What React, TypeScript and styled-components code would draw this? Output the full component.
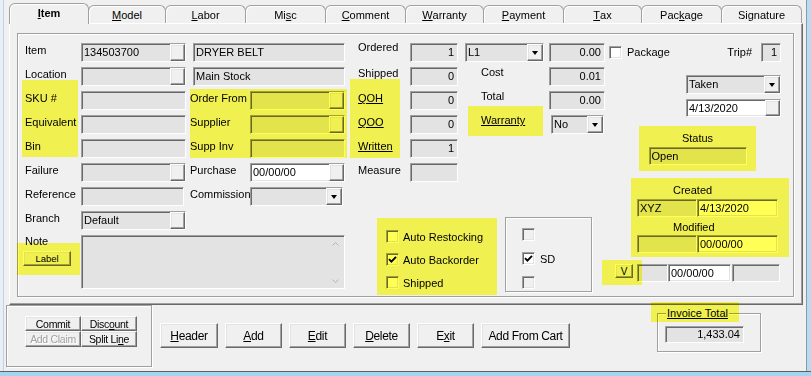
import type { ReactNode } from "react";
import styled, { createGlobalStyle, css } from "styled-components";

const SANS = `"Liberation Sans", Arial, sans-serif`;
const MARK = "#ffff55";

const GlobalStyle = createGlobalStyle`
  * { box-sizing: border-box; }
  html, body { margin: 0; padding: 0; background: #f0f0f0; }
  body { font-family: ${SANS}; font-size: 11px; color: #000; }
`;

const sunken = css`
  border: 1px solid;
  border-color: #a0a0a0 #ffffff #ffffff #a0a0a0;
  box-shadow: inset 1px 1px 0 #696969, inset -1px -1px 0 #e3e3e3;
`;

const raised = css`
  border: 1px solid;
  border-color: #ffffff #696969 #696969 #ffffff;
  box-shadow: inset -1px -1px 0 #a0a0a0, inset 1px 1px 0 #e3e3e3;
  background: #f0f0f0;
`;

const etched = css`
  border: 1px solid #a0a0a0;
  box-shadow: inset 1px 1px 0 #ffffff, 1px 1px 0 #ffffff;
`;

// yellow highlighter laid over a part of the form
const markOverlay = (ext: number[] = [0, 0, 0, 0]) => css`
  position: relative;
  &::after {
    content: "";
    position: absolute;
    top: ${-ext[0]}px;
    right: ${-ext[1]}px;
    bottom: ${-ext[2]}px;
    left: ${-ext[3]}px;
    background: ${MARK};
    mix-blend-mode: multiply;
    pointer-events: none;
  }
`;

const Mark = styled.div<{ $ext?: number[] }>`
  ${(p) => markOverlay(p.$ext)};
`;

const Window = styled.div`
  width: 811px;
  height: 376px;
  padding-left: 6px;
  background: #f0f0f0;
  overflow: hidden;
  box-shadow: inset 0 -4px 0 #a3d4f2, inset 0 -5px 0 #606060, inset -4px 0 0 #b8dbf2,
    inset -5px 0 0 #8c9aa8, inset 3px 0 0 #e6eef6, inset 4px 0 0 #c6d3df;
`;

const TabStrip = styled.div`
  display: flex;
  align-items: flex-end;
  height: 23px;
  margin-left: 3px;
`;

const Tab = styled.div<{ $w: number; $active?: boolean }>`
  position: relative;
  z-index: ${(p) => (p.$active ? 2 : 1)};
  width: ${(p) => p.$w}px;
  height: ${(p) => (p.$active ? 21 : 18)}px;
  margin-bottom: ${(p) => (p.$active ? -1 : 0)}px;
  margin-left: -1px;
  border: 1px solid #a0a0a0;
  border-bottom: none;
  border-radius: 6px 6px 0 0;
  box-shadow: inset 1px 1px 0 #ffffff;
  background: #f0f0f0;
  display: flex;
  align-items: center;
  justify-content: center;
  padding-bottom: ${(p) => (p.$active ? 2 : 0)}px;
  font-weight: ${(p) => (p.$active ? 700 : 400)};
  &:first-child {
    margin-left: 0;
  }
`;

const TabPanel = styled.div`
  margin-left: 3px;
  width: 794px;
  height: 282px;
  border: 1px solid;
  border-color: #ffffff #696969 #696969 #ffffff;
  box-shadow: inset -1px -1px 0 #a0a0a0;
  padding: 9px 8px 7px 7px;
`;

const MainFrame = styled.div`
  ${etched};
  width: 777px;
  height: 264px;
  display: flex;
  padding: 7px 0 0 4px;
`;

const LeftArea = styled.div`
  width: 583px;
  display: flex;
  flex-direction: column;
`;

const COLS = "59px 105px 64px 95px 65px 48px 86px 61px";

const GridStack = styled.div`
  display: grid;
  & > * {
    grid-area: 1 / 1;
  }
`;

const FieldGrid = styled.div`
  display: grid;
  grid-template-columns: ${COLS};
  grid-template-rows: repeat(7, 24px);
  align-items: start;
`;

const MarkGrid = styled.div`
  display: grid;
  grid-template-columns: ${COLS};
  grid-template-rows: repeat(7, 24px);
  pointer-events: none;
`;

const GridMark = styled.div<{ $area: string; $m: string }>`
  grid-area: ${(p) => p.$area};
  margin: ${(p) => p.$m};
  background: ${MARK};
  mix-blend-mode: multiply;
`;

const Label = styled.span<{ $pl?: number; $pt?: number }>`
  padding-left: ${(p) => p.$pl ?? 3}px;
  padding-top: ${(p) => p.$pt ?? 3}px;
  line-height: 13px;
  white-space: nowrap;
`;

const RowLabel = styled(Label)`
  grid-column: 1;
`;

const LinkLabel = styled(Label)`
  text-decoration: underline;
`;

type FieldProps = {
  $w?: number;
  $h?: number;
  $ml?: number;
  $mr?: number;
  $mt?: number;
  $span?: number;
  $white?: boolean;
};

const Field = styled.div<FieldProps>`
  ${sunken};
  display: flex;
  flex: none;
  height: ${(p) => p.$h ?? 19}px;
  ${(p) => (p.$w ? `width: ${p.$w}px;` : "")}
  margin: ${(p) => p.$mt ?? 0}px ${(p) => p.$mr ?? 0}px 0 ${(p) => p.$ml ?? 0}px;
  ${(p) => (p.$span ? `grid-column: span ${p.$span};` : "")}
  background: ${(p) => (p.$white ? "#ffffff" : "#e3e3e3")};
  overflow: hidden;
`;

const FieldText = styled.span<{ $right?: boolean }>`
  flex: 1;
  min-width: 0;
  padding: 0 3px 0 2px;
  align-self: center;
  line-height: 15px;
  white-space: nowrap;
  text-align: ${(p) => (p.$right ? "right" : "left")};
`;

const FieldButton = styled.span`
  ${raised};
  width: 15px;
  flex: none;
`;

const ComboArrow = styled.span`
  ${raised};
  width: 16px;
  flex: none;
  display: flex;
  align-items: center;
  justify-content: center;
  &::before {
    content: "";
    border-left: 3.5px solid transparent;
    border-right: 3.5px solid transparent;
    border-top: 4px solid #000;
  }
`;

const GridField = styled(Field)`
  margin-top: 2px;
`;

const RightArea = styled.div`
  width: 188px;
  display: flex;
  flex-direction: column;
`;

const TopLine = styled.div`
  display: flex;
  align-items: center;
  height: 19px;
  margin: 2px 12px 0 4px;
`;

const PackageLabel = styled(Label)`
  margin-right: auto;
`;

const TripLabel = styled(Label)`
  margin-right: 9px;
`;

const StatusMark = styled(Mark)`
  margin: 9px 0 0 34px;
  width: 117px;
  height: 45px;
  display: flex;
  flex-direction: column;
  align-items: center;
`;

const CreatedMark = styled(Mark)`
  margin: 7px 0 0 26px;
  width: 158px;
  height: 79px;
  padding: 6px 0 0 6px;
  display: flex;
  flex-direction: column;
`;

const PairRow = styled.div<{ $mt: number }>`
  display: flex;
  margin-top: ${(p) => p.$mt}px;
`;

const VRow = styled.div`
  display: flex;
  align-items: flex-start;
  margin: 7px 0 0 10px;
`;

const VButton = styled.div`
  ${raised};
  width: 18px;
  height: 14px;
  font-size: 10px;
  display: flex;
  align-items: center;
  justify-content: center;
`;

const BottomRow = styled.div`
  display: flex;
  align-items: flex-start;
`;

const NoteColumn = styled.div`
  width: 323px;
  display: flex;
  flex-direction: column;
`;

const BranchRow = styled.div`
  display: grid;
  grid-template-columns: 59px 105px;
  height: 24px;
  align-items: start;
`;

const NoteRow = styled.div`
  display: flex;
  margin-top: 2px;
`;

const NoteSide = styled.div`
  width: 59px;
  display: flex;
  flex-direction: column;
  align-items: flex-start;
`;

const LabelMark = styled(Mark)`
  margin: 3px 0 0 1px;
`;

const SmallButton = styled.div`
  ${raised};
  width: 48px;
  height: 15px;
  font-size: 9.5px;
  display: flex;
  align-items: center;
  justify-content: center;
`;

const NoteBox = styled.div`
  ${sunken};
  width: 264px;
  height: 54px;
  background: #e3e3e3;
  display: flex;
  justify-content: flex-end;
`;

const ScrollBar = styled.div`
  width: 17px;
  display: flex;
  flex-direction: column;
  justify-content: space-between;
  align-items: center;
  padding: 6px 0 5px;
`;

const AutoMark = styled(Mark)`
  margin: 9px 0 0 32px;
  width: 120px;
  height: 77px;
  padding: 12px 0 0 9px;
  display: flex;
  flex-direction: column;
  gap: 10px;
`;

const SDFrame = styled.div`
  ${etched};
  margin: 8px 0 0 8px;
  width: 87px;
  height: 75px;
  padding: 10px 0 0 16px;
  display: flex;
  flex-direction: column;
  gap: 11px;
`;

const CheckRow = styled.div<{ $gap?: number }>`
  display: flex;
  align-items: center;
  height: 13px;
  gap: ${(p) => p.$gap ?? 4}px;
  white-space: nowrap;
`;

const CheckBox = styled.span<{ $disabled?: boolean }>`
  ${sunken};
  width: 13px;
  height: 13px;
  flex: none;
  background: ${(p) => (p.$disabled ? "#f0f0f0" : "#ffffff")};
  display: inline-flex;
  align-items: center;
  justify-content: center;
`;

const BottomBar = styled.div`
  display: flex;
  align-items: flex-start;
  height: 66px;
`;

const ActionFrame = styled.div`
  ${etched};
  width: 146px;
  height: 62px;
  padding: 10px 0 0 18px;
`;

const MiniGrid = styled.div`
  display: grid;
  grid-template-columns: 56px 56px;
  grid-template-rows: 15px 16px;
`;

const MiniButton = styled.div<{ $disabled?: boolean }>`
  ${raised};
  font-size: 10.5px;
  letter-spacing: -0.3px;
  display: flex;
  align-items: center;
  justify-content: center;
  color: ${(p) => (p.$disabled ? "#a0a0a0" : "#000")};
  text-shadow: ${(p) => (p.$disabled ? "1px 1px 0 #fff" : "none")};
`;

const ButtonRow = styled.div`
  display: flex;
  gap: 7px;
  margin: 18px 0 0 8px;
`;

const ActionButton = styled.button<{ $w: number }>`
  ${raised};
  width: ${(p) => p.$w}px;
  height: 25px;
  padding: 0;
  font-family: ${SANS};
  font-size: 12px;
  letter-spacing: -0.35px;
  color: #000;
`;

const InvoiceSet = styled.fieldset`
  margin: 2px 0 0 87px;
  padding: 0 7px;
  width: 104px;
  height: 45px;
  min-width: 0;
  border: 1px solid #a0a0a0;
  box-shadow: inset 1px 1px 0 #ffffff, 1px 1px 0 #ffffff;
`;

const InvoiceLegend = styled.legend`
  ${markOverlay([5, 10, 2, 15])};
  margin-left: 1px;
  padding: 0 1px;
  line-height: 13px;
  background: #f0f0f0;
  text-decoration: underline;
`;

const Tick = () => (
  <svg width="9" height="9" viewBox="0 0 9 9">
    <path d="M1 4.2 L3.4 6.6 L8 1.8" fill="none" stroke="#000" strokeWidth="1.9" />
  </svg>
);

const Chevron = ({ up }: { up?: boolean }) => (
  <svg width="7" height="4" viewBox="0 0 7 4">
    <path d={up ? "M0.5 3.5 L3.5 0.5 L6.5 3.5" : "M0.5 0.5 L3.5 3.5 L6.5 0.5"} fill="none" stroke="#b4b4b4" />
  </svg>
);

const TABS: { label: ReactNode; w: number; active?: boolean }[] = [
  { label: <><u>I</u>tem</>, w: 80, active: true },
  { label: <><u>M</u>odel</>, w: 78 },
  { label: <><u>L</u>abor</>, w: 81 },
  { label: <>Mi<u>s</u>c</>, w: 81 },
  { label: <><u>C</u>omment</>, w: 81 },
  { label: <><u>W</u>arranty</>, w: 79 },
  { label: <><u>P</u>ayment</>, w: 81 },
  { label: <><u>T</u>ax</>, w: 79 },
  { label: <>Pac<u>k</u>age</>, w: 81 },
  { label: <>Signature</>, w: 81 },
];

export default function App() {
  return (
    <>
      <GlobalStyle />
      <Window>
        <TabStrip>
          {TABS.map((t, i) => (
            <Tab key={i} $w={t.w} $active={t.active}>
              {t.label}
            </Tab>
          ))}
        </TabStrip>

        <TabPanel>
          <MainFrame>
            <LeftArea>
              <GridStack>
                <FieldGrid>
                  <RowLabel>Item</RowLabel>
                  <GridField><FieldText>134503700</FieldText><FieldButton /></GridField>
                  <GridField $span={2} $ml={7}><FieldText>DRYER BELT</FieldText></GridField>
                  <Label $pl={13} $pt={0}>Ordered</Label>
                  <GridField><FieldText $right>1</FieldText></GridField>
                  <GridField $ml={7}><FieldText>L1</FieldText><ComboArrow /></GridField>
                  <GridField $ml={5}><FieldText $right>0.00</FieldText></GridField>

                  <RowLabel>Location</RowLabel>
                  <GridField><FieldText /><FieldButton /></GridField>
                  <GridField $span={2} $ml={7}><FieldText>Main Stock</FieldText></GridField>
                  <Label $pl={13} $pt={2}>Shipped</Label>
                  <GridField><FieldText $right>0</FieldText></GridField>
                  <Label $pl={23} $pt={1}>Cost</Label>
                  <GridField $ml={5}><FieldText $right>0.01</FieldText></GridField>

                  <RowLabel>SKU #</RowLabel>
                  <GridField />
                  <Label $pl={4}>Order From</Label>
                  <GridField><FieldText /><FieldButton /></GridField>
                  <LinkLabel $pl={13}>QOH</LinkLabel>
                  <GridField><FieldText $right>0</FieldText></GridField>
                  <Label $pl={23} $pt={1}>Total</Label>
                  <GridField $ml={5}><FieldText $right>0.00</FieldText></GridField>

                  <RowLabel>Equivalent</RowLabel>
                  <GridField />
                  <Label $pl={4}>Supplier</Label>
                  <GridField><FieldText /><FieldButton /></GridField>
                  <LinkLabel $pl={13}>QOO</LinkLabel>
                  <GridField><FieldText $right>0</FieldText></GridField>
                  <LinkLabel $pl={23} $pt={1}>Warranty</LinkLabel>
                  <GridField $ml={7} $mr={1}><FieldText>No</FieldText><ComboArrow /></GridField>

                  <RowLabel>Bin</RowLabel>
                  <GridField />
                  <Label $pl={4}>Supp Inv</Label>
                  <GridField />
                  <LinkLabel $pl={13}>Written</LinkLabel>
                  <GridField><FieldText $right>1</FieldText></GridField>

                  <RowLabel>Failure</RowLabel>
                  <GridField><FieldText /><FieldButton /></GridField>
                  <Label $pl={4}>Purchase</Label>
                  <GridField $white><FieldText>00/00/00</FieldText><FieldButton /></GridField>
                  <Label $pl={13}>Measure</Label>
                  <GridField />

                  <RowLabel>Reference</RowLabel>
                  <GridField $mr={2} />
                  <Label $pl={4}>Commission</Label>
                  <GridField $mr={2}><FieldText /><ComboArrow /></GridField>
                </FieldGrid>

                <MarkGrid>
                  <GridMark $area="3 / 1 / 6 / 2" $m="-9px 3px 4px 0" />
                  <GridMark $area="3 / 3 / 6 / 5" $m="0 -2px 3px 4px" />
                  <GridMark $area="3 / 5 / 6 / 6" $m="-10px 10px 3px 5px" />
                  <GridMark $area="4 / 7 / 5 / 8" $m="-7px 1px 1px 10px" />
                </MarkGrid>
              </GridStack>

              <BottomRow>
                <NoteColumn>
                  <BranchRow>
                    <Label>Branch</Label>
                    <Field $mt={2}><FieldText>Default</FieldText><FieldButton /></Field>
                  </BranchRow>
                  <NoteRow>
                    <NoteSide>
                      <Label $pt={0}>Note</Label>
                      <LabelMark $ext={[8, 9, 9, 6]}>
                        <SmallButton>Label</SmallButton>
                      </LabelMark>
                    </NoteSide>
                    <NoteBox>
                      <ScrollBar>
                        <Chevron up />
                        <Chevron />
                      </ScrollBar>
                    </NoteBox>
                  </NoteRow>
                </NoteColumn>

                <AutoMark>
                  <CheckRow><CheckBox />Auto Restocking</CheckRow>
                  <CheckRow><CheckBox><Tick /></CheckBox>Auto Backorder</CheckRow>
                  <CheckRow><CheckBox />Shipped</CheckRow>
                </AutoMark>

                <SDFrame>
                  <CheckRow><CheckBox $disabled /></CheckRow>
                  <CheckRow $gap={5}><CheckBox><Tick /></CheckBox>SD</CheckRow>
                  <CheckRow><CheckBox $disabled /></CheckRow>
                </SDFrame>
              </BottomRow>
            </LeftArea>

            <RightArea>
              <TopLine>
                <CheckBox />
                <PackageLabel $pl={5} $pt={0}>Package</PackageLabel>
                <TripLabel $pl={0} $pt={0}>Trip#</TripLabel>
                <Field $w={20}><FieldText $right>1</FieldText></Field>
              </TopLine>
              <Field $w={95} $ml={81} $mt={13}><FieldText>Taken</FieldText><ComboArrow /></Field>
              <Field $w={95} $h={18} $ml={81} $mt={5} $white><FieldText>4/13/2020</FieldText><FieldButton /></Field>

              <StatusMark>
                <Label $pl={0} $pt={6}>Status</Label>
                <Field $w={98} $h={18} $mt={2}><FieldText>Open</FieldText></Field>
              </StatusMark>

              <CreatedMark>
                <Label $pl={36} $pt={0}>Created</Label>
                <PairRow $mt={2}>
                  <Field $w={60} $h={18}><FieldText>XYZ</FieldText></Field>
                  <Field $w={81} $h={18} $white><FieldText>4/13/2020</FieldText></Field>
                </PairRow>
                <Label $pl={36} $pt={4}>Modified</Label>
                <PairRow $mt={1}>
                  <Field $w={60} $h={18} />
                  <Field $w={81} $h={18} $white><FieldText>00/00/00</FieldText></Field>
                </PairRow>
              </CreatedMark>

              <VRow>
                <Mark $ext={[4, 9, 7, 13]}>
                  <VButton>V</VButton>
                </Mark>
                <Field $w={31} $h={18} $ml={4} />
                <Field $w={63} $h={18} $white><FieldText>00/00/00</FieldText></Field>
                <Field $w={48} $h={18} $ml={1} />
              </VRow>
            </RightArea>
          </MainFrame>
        </TabPanel>

        <BottomBar>
          <ActionFrame>
            <MiniGrid>
              <MiniButton>Commit</MiniButton>
              <MiniButton>Disc<u>o</u>unt</MiniButton>
              <MiniButton $disabled>Add Claim</MiniButton>
              <MiniButton>Split Li<u>n</u>e</MiniButton>
            </MiniGrid>
          </ActionFrame>

          <ButtonRow>
            <ActionButton $w={58}><u>H</u>eader</ActionButton>
            <ActionButton $w={57}><u>A</u>dd</ActionButton>
            <ActionButton $w={57}><u>E</u>dit</ActionButton>
            <ActionButton $w={57}><u>D</u>elete</ActionButton>
            <ActionButton $w={57}>E<u>x</u>it</ActionButton>
            <ActionButton $w={89}>Add From Cart</ActionButton>
          </ButtonRow>

          <InvoiceSet>
            <InvoiceLegend>Invoice Total</InvoiceLegend>
            <Field $w={79} $h={17} $mt={6}><FieldText $right>1,433.04</FieldText></Field>
          </InvoiceSet>
        </BottomBar>
      </Window>
    </>
  );
}
